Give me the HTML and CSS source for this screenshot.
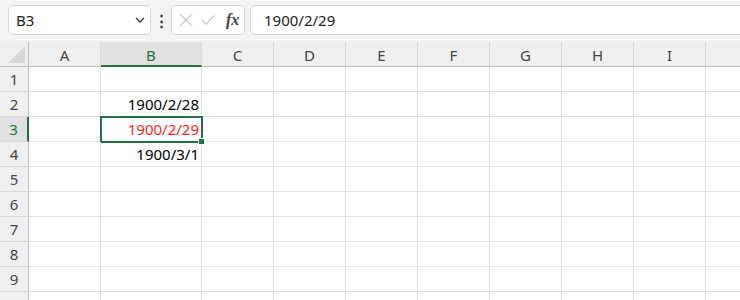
FILE: index.html
```html
<!DOCTYPE html>
<html lang="ja">
<head>
    <meta charset="UTF-8">
    <title>Sheet1</title>
    <link rel="stylesheet" href="styles.css">
</head>
<body>
    <div class="toolbar">
        <div class="namebox">
            <span>B3</span>
            <svg class="chevron" width="10" height="6" viewBox="0 0 10 6"><path d="M1 1 L5 5 L9 1" fill="none" stroke="#333" stroke-width="1.3"/></svg>
        </div>
        <div class="more">⋮</div>
        <div class="fxbox">
            <svg width="14" height="14" viewBox="0 0 14 14"><path d="M1 1 L13 13 M13 1 L1 13" stroke="#c8c8c8" stroke-width="1.2"/></svg>
            <svg width="14" height="14" viewBox="0 0 14 14"><path d="M1 7.5 L5 11.5 L13 2.5" fill="none" stroke="#c8c8c8" stroke-width="1.2"/></svg>
            <span class="fx">fx</span>
        </div>
        <div class="formula">1900/2/29</div>
    </div>

    <div class="sheet">
        <div class="corner"><svg width="17" height="17" viewBox="0 0 17 17"><polygon points="17,0 17,17 0,17" fill="#d6d6d6"/></svg></div>
        <div class="colhead">A</div>
        <div class="colhead active">B</div>
        <div class="colhead">C</div>
        <div class="colhead">D</div>
        <div class="colhead">E</div>
        <div class="colhead">F</div>
        <div class="colhead">G</div>
        <div class="colhead">H</div>
        <div class="colhead">I</div>
        <div class="colhead"></div>

        <div class="rowhead">1</div>
        <div class="cell"></div><div class="cell"></div><div class="cell"></div><div class="cell"></div><div class="cell"></div><div class="cell"></div><div class="cell"></div><div class="cell"></div><div class="cell"></div><div class="cell"></div>

        <div class="rowhead">2</div>
        <div class="cell"></div><div class="cell num">1900/2/28</div><div class="cell"></div><div class="cell"></div><div class="cell"></div><div class="cell"></div><div class="cell"></div><div class="cell"></div><div class="cell"></div><div class="cell"></div>

        <div class="rowhead active">3</div>
        <div class="cell"></div><div class="cell num red selected">1900/2/29<span class="handle"></span></div><div class="cell"></div><div class="cell"></div><div class="cell"></div><div class="cell"></div><div class="cell"></div><div class="cell"></div><div class="cell"></div><div class="cell"></div>

        <div class="rowhead">4</div>
        <div class="cell"></div><div class="cell num">1900/3/1</div><div class="cell"></div><div class="cell"></div><div class="cell"></div><div class="cell"></div><div class="cell"></div><div class="cell"></div><div class="cell"></div><div class="cell"></div>

        <div class="rowhead">5</div>
        <div class="cell"></div><div class="cell"></div><div class="cell"></div><div class="cell"></div><div class="cell"></div><div class="cell"></div><div class="cell"></div><div class="cell"></div><div class="cell"></div><div class="cell"></div>

        <div class="rowhead">6</div>
        <div class="cell"></div><div class="cell"></div><div class="cell"></div><div class="cell"></div><div class="cell"></div><div class="cell"></div><div class="cell"></div><div class="cell"></div><div class="cell"></div><div class="cell"></div>

        <div class="rowhead">7</div>
        <div class="cell"></div><div class="cell"></div><div class="cell"></div><div class="cell"></div><div class="cell"></div><div class="cell"></div><div class="cell"></div><div class="cell"></div><div class="cell"></div><div class="cell"></div>

        <div class="rowhead">8</div>
        <div class="cell"></div><div class="cell"></div><div class="cell"></div><div class="cell"></div><div class="cell"></div><div class="cell"></div><div class="cell"></div><div class="cell"></div><div class="cell"></div><div class="cell"></div>

        <div class="rowhead">9</div>
        <div class="cell"></div><div class="cell"></div><div class="cell"></div><div class="cell"></div><div class="cell"></div><div class="cell"></div><div class="cell"></div><div class="cell"></div><div class="cell"></div><div class="cell"></div>

        <div class="rowhead">10</div>
        <div class="cell"></div><div class="cell"></div><div class="cell"></div><div class="cell"></div><div class="cell"></div><div class="cell"></div><div class="cell"></div><div class="cell"></div><div class="cell"></div><div class="cell"></div>
    </div>
</body>
</html>
```

FILE: styles.css
```css
body {
    margin: 0;
    width: 740px;
    height: 300px;
    overflow: hidden;
    background: #f3f3f3;
    font-family: "Noto Sans", "Noto Sans CJK JP", sans-serif;
    font-size: 15px;
    color: #222;
}

.toolbar {
    display: flex;
    align-items: center;
    height: 30px;
    padding: 5px 0 7px 8px;
    overflow: hidden;
}

.namebox,
.fxbox,
.formula {
    box-sizing: border-box;
    height: 30px;
    background: white;
    border: 1px solid #d6d6d6;
    border-radius: 5px;
}

.namebox {
    width: 143px;
    display: flex;
    align-items: center;
    justify-content: space-between;
    padding: 0 5px 0 7px;
}

.more {
    width: 20px;
    text-align: center;
    font-weight: bold;
    color: #333;
}

.fxbox {
    width: 74px;
    display: flex;
    align-items: center;
    gap: 8px;
    padding-left: 7px;
}

.fx {
    font-family: "Liberation Serif", serif;
    font-style: italic;
    font-weight: bold;
    font-size: 16px;
    color: #444;
    margin-left: 3px;
}

.formula {
    flex: 1;
    margin-left: 5px;
    margin-right: -10px;
    display: flex;
    align-items: center;
    padding-left: 13px;
}

.sheet {
    display: grid;
    grid-template-columns: 29px 72px 101px 72px 72px 72px 72px 72px 72px 72px 72px;
    grid-auto-rows: 25px;
    height: 258px;
    overflow: hidden;
    background: white;
}

.corner,
.colhead,
.rowhead {
    box-sizing: border-box;
    background: #f0f0f0;
    color: #444;
    display: flex;
    align-items: center;
    justify-content: center;
}

.corner {
    align-items: flex-end;
    justify-content: flex-end;
    padding: 0 3px 3px 0;
    border-right: 1px solid #bdbdbd;
    border-bottom: 1px solid #bdbdbd;
}

.colhead {
    border-right: 1px solid #d9d9d9;
    border-bottom: 1px solid #bdbdbd;
    padding-top: 1px;
}

.colhead.active {
    background: #e1e1e1;
    color: #217346;
    border-bottom: 2px solid #217346;
    padding-top: 2px;
}

.rowhead {
    border-right: 1px solid #bdbdbd;
    border-bottom: 1px solid #d9d9d9;
}

.rowhead.active {
    background: #e1e1e1;
    color: #217346;
    border-right: 2px solid #217346;
}

.cell {
    box-sizing: border-box;
    border-right: 1px solid #e1e1e1;
    border-bottom: 1px solid #e1e1e1;
    display: flex;
    align-items: flex-end;
    padding: 0 2px 2px;
    color: #000;
    position: relative;
}

.num {
    justify-content: flex-end;
}

.red {
    color: #ff1f1f;
}

.selected {
    outline: 2px solid #217346;
    outline-offset: -1px;
}

.handle {
    position: absolute;
    right: -4px;
    bottom: -4px;
    z-index: 1;
    width: 5px;
    height: 5px;
    background: #217346;
    border: 1px solid white;
}
```
